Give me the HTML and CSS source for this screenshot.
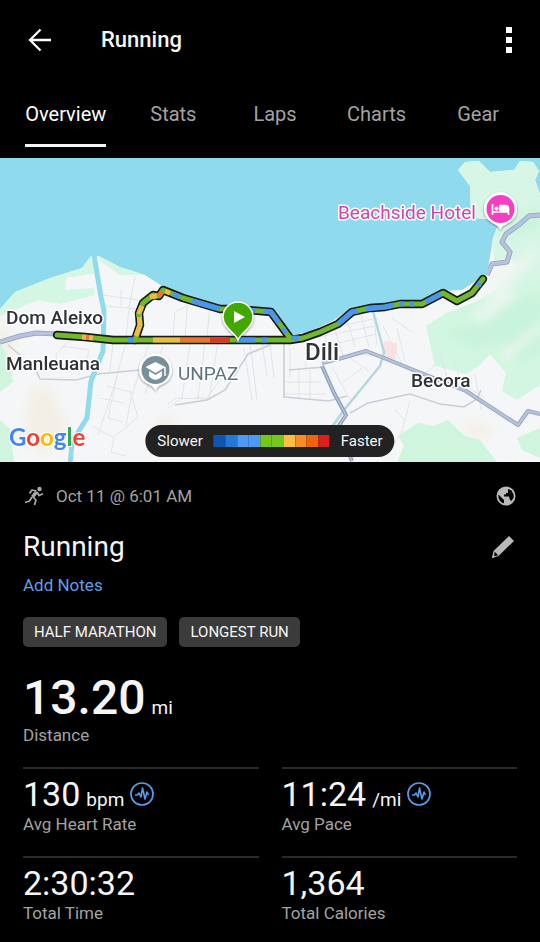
FILE: index.html
```html
<!DOCTYPE html>
<html lang="en">
<head>
<meta charset="utf-8">
<meta name="viewport" content="width=device-width, initial-scale=1">
<title>Running</title>
<link rel="stylesheet" href="styles.css">
</head>
<body>
<header class="topbar">
  <button class="icon-btn" type="button" aria-label="Back">
    <svg width="24" height="24" viewBox="0 0 24 24" fill="none" stroke="#fff" stroke-width="2.3"><path d="M23 12H2.500M12.500 1.500L2 12l10.500 10.500"/></svg>
  </button>
  <h1 class="topbar-title">Running</h1>
  <button class="icon-btn" type="button" aria-label="More options">
    <svg width="6" height="26" viewBox="0 0 6 26" fill="#fff"><path d="M0 0h6v6H0zM0 10h6v6H0zM0 20h6v6H0z"/></svg>
  </button>
</header>
<nav class="tabs">
  <a class="tab tab-active" href="#overview"><span>Overview</span></a>
  <a class="tab" href="#stats"><span>Stats</span></a>
  <a class="tab" href="#laps"><span>Laps</span></a>
  <a class="tab" href="#charts"><span>Charts</span></a>
  <a class="tab" href="#gear"><span>Gear</span></a>
</nav>
<section class="map">
  <svg class="map-art" viewBox="0 0 540 304" role="img" aria-label="Route map">
    <defs>
      <filter id="soft" x="-20%" y="-20%" width="140%" height="140%"><feGaussianBlur stdDeviation="4"/></filter>
      <filter id="drop" x="-30%" y="-30%" width="160%" height="160%"><feDropShadow dx="0" dy="1" stdDeviation="1.200" flood-opacity=".45"/></filter>
      <clipPath id="land"><path d="M0 151L15 134 50 120 82 110 91 98H99L120 109 145 117 162 128 190 138 220 148 270 151 281 164 292 177 310 174 334 162 350 151 372 147 400 144 424 144 443 133 462 132 487 116 493 80 500 62 471 60 470 28 458 12 465 4 479 3 490 14 514 12 520 3 533 4 539 13 535 22 540 36V304H0Z"/></clipPath>
    </defs>
    <rect width="540" height="304" fill="#90daee"/>
    <g clip-path="url(#land)">
      <rect width="540" height="304" fill="#f5f6f7"/>
      <!-- vegetation and hills -->
      <path fill="#d3f7e3" d="M0 150L15 134 50 120 82 110 91 96 96 115 66 120 65 132 94 130 95 137 60 146 38 142 0 158ZM98 98l24 12 20 7-22 0-20-14z"/>
      <path fill="#d7f6e5" d="M455 0H540V140L500 150 480 146 483 142 500 128 517 108 510 100 494 103 492 78 500 60 468 60Z"/>
      <path fill="#d2f6e1" d="M426 168l20-13 31-12 14-8 18-4 31-10v106l-23 15-15-9 4-18-16-19-11 12-13 8-31-8z"/>
      <g filter="url(#soft)">
        <path fill="#c3f1d8" opacity=".6" d="M445 176l36-12 30-22 29-6v60l-25 8-10-22-30 8zM515 60l25-10v20l-32 10z"/>
        <path fill="#eef6f0" opacity=".8" d="M502 112l34-24 4 8-40 44-20 2zM470 157l38-26 10 8-35 26zM500 196l40-32v8l-34 34z"/>
        <path fill="#f3eee2" opacity=".8" d="M0 160l14 20-2 35-12-5zM30 230l22 0 15 38-20 30-24-15zM155 262l20-3 4 25-12 10zM465 264l18 3 14 6-15 8-18-8z"/>
      </g>
      <g fill="#d0f5df">
        <path d="M0 184l10 18 3 22-13 10zM0 262l10 9 4 33H0zM398 278l20-13 15 3 15-6 17 16 15 4 17 22H397l7-16zM517 280l23-10v30l-18-8z"/>
      </g>
      <path fill="#fbe1e2" d="M384 183l13 2-1 17-14-3z"/>
      <!-- minor streets -->
      <g fill="none" stroke="#e1e4eb" stroke-width="1">
        <path d="M135 118l-6 32-3 32M103 137l35 5M121 132v16M106 148l32 3M70 182l-14 14 1 11 26-1M62 188l27 4-3 14M126 184l-12 45-16 48M113 185l-3 28M148 188l-17 52-5 28M163 188l-18 48M190 186l-8 54-14 10M205 184l-7 56M218 184l-9 57-14-2M107 228l28 7M117 218l-9 42 15 4M100 240l24 5M92 268l22 12-3 14 15 4M130 234l8 25-24 20M168 246l8-6 30 1 20-27M188 138l-3 42M210 148l-3 31M250 185l7 57M262 186l5 32M173 178l2-24 20-10"/>
        <path d="M244 190l8 52M270 186l4 34M290 190v30M299 210v30M310 212v30M283 224h38M284 236h42M306 180v30M325 178l6 26M335 172l8 26M347 162l8 27M360 153l9 36M373 153l4 34M326 188l50-12M313 180l67-13M331 170l47-10M305 192l20-3M332 209l20 36M350 200l20 14M342 225l20-15M383 168l20 40M397 170l8 34M392 160l20 14M360 196l35 4M405 210l17 8 14-12M440 197l10 30 22-2M455 204l8 30M475 216l6 36M463 226l22 14M410 243l-8 30-14 24M395 252l10 10"/>
      </g>
      <g fill="none" stroke="#caced8" stroke-width="1.600">
        <path d="M8 187l12 10M35 210l5 11 36 1 22-6 42-4M175 247l32-5 18-10 23-36 22-9M284 184l0 55 45 4 18-5M289 212l35-3M350 255l18-10 42-9 30 10 24 3 13-8 4-9"/>
      </g>
      <!-- rivers -->
      <path d="M94 97l7 42 3 14-1 40-12 30-4 37-15 24-2 24" fill="none" stroke="#90daee" stroke-width="5" stroke-linejoin="round"/>
      <path d="M373 153l11 41-4 14-36 44-12 17 0 14" fill="none" stroke="#b2d8e1" stroke-width="2.500"/>
      <!-- main roads -->
      <g fill="none" stroke-linejoin="round">
        <g stroke="#8e9fbe" stroke-width="5"><path d="M0 184l20-6 16-3 20 1"/><path d="M322 208l12 27 12 22-8 12 8 20 6 14" stroke-width="4"/><path d="M322 205l20-5 24-7 18 7 37 15 45 18 52 34 10-14 12 3" stroke-width="4"/><path d="M487 117l5-11 15-2 3-10-8-10 4-8 14-10 9-8 11-1"/></g>
        <g stroke="#b7c3dc" stroke-width="3.400"><path d="M0 184l20-6 16-3 20 1"/><path d="M322 208l12 27 12 22-8 12 8 20 6 14" stroke-width="1.500"/><path d="M322 205l20-5 24-7 18 7 37 15 45 18 52 34 10-14 12 3" stroke-width="2.400"/><path d="M487 117l5-11 15-2 3-10-8-10 4-8 14-10 9-8 11-1"/></g>
      </g>
    </g>
    <!-- activity route -->
    <g fill="none" stroke-linejoin="round">
      <g stroke="#15191b" stroke-width="8.400" stroke-linecap="round">
        <path d="M57 177L85 179 113 182H290L303 180 320 174 338 166 352 154 370 150 385 149 400 146 422 146 443 135 457 143 472 135 483 121"/>
        <path d="M135 182L140 167 139 155 143 145 153 137 159 138 163 132 183 140 220 151 237 151 271 154 282 169 290 180"/>
      </g>
      <g stroke="#73b82b" stroke-width="5" stroke-linecap="round">
        <path d="M57 177L85 179 113 182H290L303 180 320 174 338 166 352 154 370 150 385 149 400 146 422 146 443 135 457 143 472 135 483 121"/>
        <path d="M135 182L140 167 139 155 143 145 153 137 159 138 163 132 183 140 220 151 237 151 271 154 282 169 290 180"/>
      </g>
      <g stroke-width="5">
        <path stroke="#4a96ed" d="M128 182h6M237 182h18M262 182h5M291 180l8 0M338 166l14-12 6-1M366 151l19-2 9-2M399 146l5 0M410 146l4 0M426 144l15-8M173 136l7 3M192 143l28 8M239 151l17 2M263 153l8 1 8 11M283 170l3 5M478 128l2-3"/>
        <path stroke="#e9bc45" d="M82 179l11 1M136 178l4-11-1-12 3-7M150 139l7-1M165 133l5 2M153 182h27"/>
        <path stroke="#ed742b" d="M86 179.300l3 .3M159 138l3-4M180 182h46"/>
        <path stroke="#d73a24" d="M210 182h20"/>
        <path stroke="#73b82b" d="M139 159l0-3"/>
      </g>
    </g>
    <!-- start marker -->
    <path filter="url(#drop)" d="M238 182c-2-7-15-12-15-23a15 15 0 0 1 30 0c0 11-13 16-15 23z" fill="#43a800" stroke="#f7fff2" stroke-width="1.500"/>
    <path d="M234 153v12l11-6z" fill="#fff"/>
    <!-- university marker -->
    <g filter="url(#drop)">
      <path d="M155.500 233c-2-6-7-6-12-10a16.500 16.500 0 1 1 24 0c-5 4-10 4-12 10z" fill="#fff"/>
      <circle cx="155.500" cy="212" r="14" fill="#78909c"/>
      <path d="M155.500 204l10 5-10 6-10-6zM149 213l6.500 4 6.500-4v5c-4 5-9 5-13 0z" fill="#fff"/>
      <path d="M165 209v9" stroke="#fff" stroke-width="1.500"/>
    </g>
    <!-- hotel marker -->
    <g filter="url(#drop)">
      <path d="M500.500 72c-2-6-7-5-12-10a16.500 16.500 0 1 1 24 0c-5 5-10 4-12 10z" fill="#fff"/>
      <circle cx="500.500" cy="51" r="14" fill="#f33fc3"/>
      <path d="M492.500 46v11M492.500 54h16v3M508.500 54v-3.500a3 3 0 0 0-3-3H500V53" fill="none" stroke="#fff" stroke-width="1.600"/>
      <path d="M500 47.500h5.500a3 3 0 0 1 3 3V54H500z" fill="#fff"/><circle cx="496.500" cy="50.500" r="2" fill="#fff"/>
    </g>
    <g class="place">
      <text x="6" y="166">Dom Aleixo</text>
      <text x="6" y="212">Manleuana</text>
      <text x="411" y="229">Becora</text>
      <text class="place-city" x="305" y="202">Dili</text>
      <text class="place-school" x="178" y="222">UNPAZ</text>
      <text class="place-hotel" x="338" y="61">Beachside Hotel</text>
    </g>
    <text class="google" x="9" y="288"><tspan fill="#4285f4">G</tspan><tspan fill="#ea4335">o</tspan><tspan fill="#fbbc05">o</tspan><tspan fill="#4285f4">g</tspan><tspan fill="#34a853">l</tspan><tspan fill="#ea4335">e</tspan></text>
  </svg>
  <div class="legend">
    <span>Slower</span>
    <div class="legend-bar"><i class="c1"></i><i class="c2"></i><i class="c3"></i><i class="c3"></i><i class="c4"></i><i class="c4"></i><i class="c5"></i><i class="c6"></i><i class="c7"></i><i class="c8"></i></div>
    <span>Faster</span>
  </div>
</section>
<main class="details">
  <div class="meta">
    <svg width="20" height="20" viewBox="0 0 20 20" fill="none" stroke="#a9a9a9" stroke-width="1.700" stroke-linejoin="round"><circle cx="15.500" cy="3" r="2.200" fill="#a9a9a9" stroke="none"/><path d="M12.500 6L8.500 11" stroke-width="3.600"/><path d="M12.500 5L8 4 5.500 7.500M13 6l2 3.500 4-1.800M8 11l-2.500 4L1 16.500M9 11l3 3-1.500 5"/></svg>
    <span class="meta-date">Oct 11 @ 6:01 AM</span>
    <button class="icon-btn" type="button" aria-label="Visible to everyone">
      <svg width="20" height="20" viewBox="0 0 20 20"><circle cx="10" cy="10" r="8.500" fill="#b9b9b9" stroke="#b9b9b9" stroke-width="2"/><path fill="#000" d="M2.500 8.500L8 14v3.300C4.500 16.500 1.800 13 2.500 8.500zM12 3l3.500 1.500 2 4 .2 3-2.200 3.500-1.500-1-1-3.500H8V8.500h2V7h2z"/></svg>
    </button>
  </div>
  <div class="title-row">
    <h2 class="title">Running</h2>
    <button class="icon-btn" type="button" aria-label="Edit title">
      <svg width="24" height="24" viewBox="0 0 24 24"><path d="M1 23L2.500 16 18 1l5 5L7.500 21z" fill="#b9b9b9"/><path d="M3.600 16.800l3.600 3.400-4 1z" fill="#000"/><path d="M1 23l.7-2.800 2 2.100z" fill="#b9b9b9"/></svg>
    </button>
  </div>
  <a class="notes" href="#notes">Add Notes</a>
  <div class="chips"><span class="chip">HALF MARATHON</span><span class="chip">LONGEST RUN</span></div>
  <div class="distance"><p class="value big">13.20 <small>mi</small></p><p class="label">Distance</p></div>
  <div class="stats">
    <div class="stat">
      <p class="value">130 <small>bpm</small>
        <button class="icon-btn" type="button" aria-label="Heart rate chart"><svg width="24" height="24" viewBox="0 0 24 24" fill="none" stroke="#579be9"><circle cx="12" cy="12" r="11" stroke-width="1.700"/><path stroke-width="1.600" stroke-linejoin="round" d="M5 13h2.500l1.500-2 2 4 1.500-9 2.500 11 2-7 1.500 3"/></svg></button></p>
      <p class="label">Avg Heart Rate</p>
    </div>
    <div class="stat">
      <p class="value">11:24 <small>/mi</small>
        <button class="icon-btn" type="button" aria-label="Pace chart"><svg width="24" height="24" viewBox="0 0 24 24" fill="none" stroke="#579be9"><circle cx="12" cy="12" r="11" stroke-width="1.700"/><path stroke-width="1.600" stroke-linejoin="round" d="M5 13h2.500l1.500-2 2 4 1.500-9 2.500 11 2-7 1.500 3"/></svg></button></p>
      <p class="label">Avg Pace</p>
    </div>
    <div class="stat"><p class="value">2:30:32</p><p class="label">Total Time</p></div>
    <div class="stat"><p class="value">1,364</p><p class="label">Total Calories</p></div>
  </div>
</main>
</body>
</html>
```
FILE: styles.css
```css
* { box-sizing: border-box; }
body, h1, h2, p { margin: 0; }
body { background: #000; color: #f5f5f5; font-family: Roboto, "Liberation Sans", sans-serif; }
svg { display: block; }
a { text-decoration: none; }
small { font-size: 19px; line-height: 20px; font-weight: 400; }

.icon-btn { padding: 0; border: 0; background: none; cursor: pointer; }

.topbar { display: flex; align-items: center; height: 80px; padding: 0 28px; }
.topbar-title { flex: 1; margin-left: 49px; font-size: 22px; line-height: 28px; font-weight: 500; }

.tabs { display: grid; grid-template-columns: 19fr 17fr 17fr 17fr 17fr; padding: 0 11px 11px 9px; }
.tab { display: flex; justify-content: center; padding-top: 22px; font-size: 20px; line-height: 24px; color: #a3a3a3; }
.tab span { padding-bottom: 18px; border-bottom: 3px solid transparent; }
.tab-active { color: #fff; }
.tab-active span { border-color: #f5f5f5; }

.map { position: relative; }
.map-art { width: 100%; height: auto; }
.place { font-size: 19px; font-weight: 500; fill: #303236; stroke: #fff; stroke-width: 3px; stroke-linejoin: round; paint-order: stroke; }
.place-city { font-size: 24px; }
.place-school { font-weight: 400; fill: #5c747e; }
.place-hotel { font-weight: 400; fill: #cf43af; }
.google { font-family: Lato, sans-serif; font-size: 24px; font-weight: 700; stroke: #fff; stroke-width: 2px; paint-order: stroke; }
.legend { position: absolute; left: 50%; bottom: 5px; transform: translateX(-50%); display: flex; align-items: center; gap: 11px; height: 32px; padding: 0 12px; border-radius: 16px; background: #222; font-size: 15px; color: #f5f5f5; }
.legend-bar { display: grid; grid-template-columns: repeat(10, 1fr); width: 116px; height: 12px; }
.c1 { background: #0f54ad; }
.c2 { background: #2478d6; }
.c3 { background: #4b9bf6; }
.c4 { background: #76c61e; }
.c5 { background: #fabf43; }
.c6 { background: #fa8b2b; }
.c7 { background: #f0640d; }
.c8 { background: #d9201d; }

.details { padding: 24px 23px; }
.meta, .title-row { display: flex; align-items: center; }
.meta { gap: 12px; padding: 0 1px; line-height: 20px; }
.meta-date { flex: 1; font-size: 17px; color: #a3a3a3; }
.title-row { justify-content: space-between; height: 36px; margin-top: 23px; padding-right: 2px; }
.title { font-size: 28px; line-height: 36px; font-weight: 400; }
.notes { display: block; margin-top: 10px; font-size: 17px; line-height: 20px; color: #5f9eea; }
.chips { display: flex; gap: 12px; margin-top: 22px; }
.chip { padding: 0 11px; border-radius: 5px; background: #3b3b3b; font-size: 15px; line-height: 30px; }
.label { font-size: 17px; line-height: 20px; color: #a3a3a3; }
.distance { margin-top: 24px; }
.distance .label { margin-bottom: 22px; }
.stats { display: grid; grid-template-columns: 1fr 1fr; column-gap: 23px; }
.stat { height: 89px; padding-top: 5px; border-top: 2px solid #2b2b2b; }
.value { display: flex; align-items: baseline; gap: 6px; font-size: 34px; line-height: 40px; }
.value .icon-btn { align-self: center; }
.big { font-size: 48px; line-height: 54px; font-weight: 500; }
```
